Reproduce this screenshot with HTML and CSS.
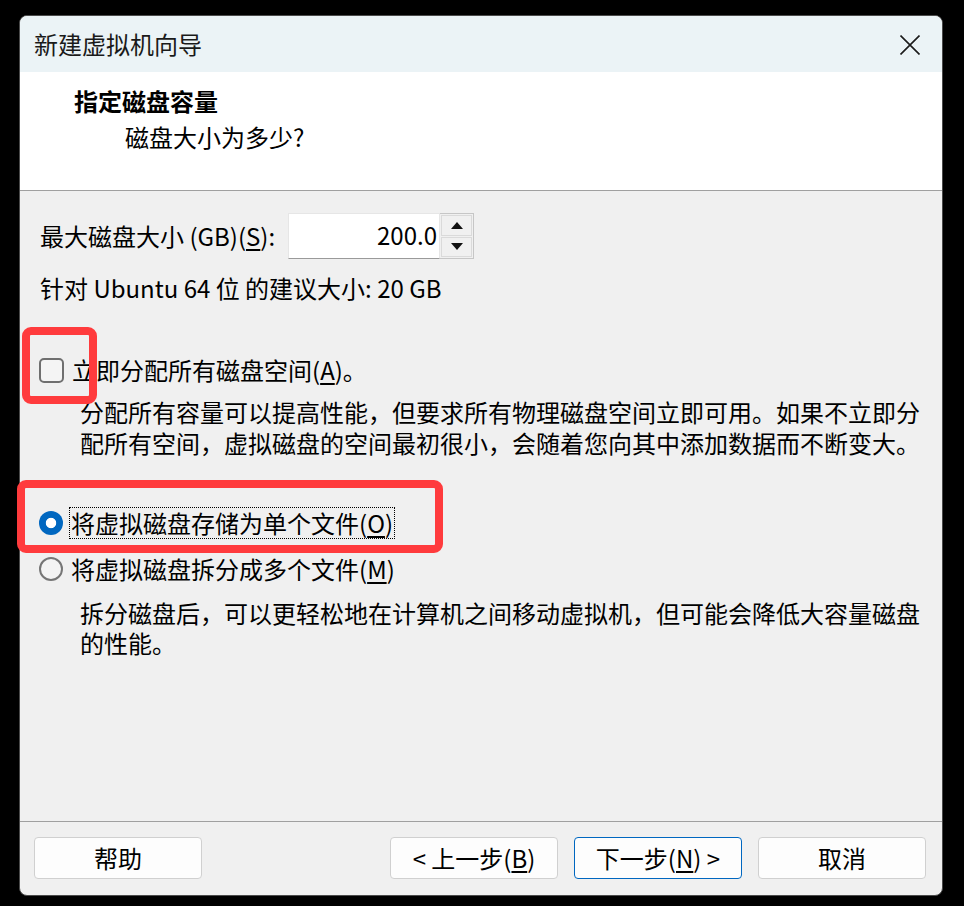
FILE: index.html
```html
<!DOCTYPE html>
<html lang="zh-CN">
<head>
<meta charset="utf-8">
<title>新建虚拟机向导</title>
<link rel="stylesheet" href="styles.css">
</head>
<body>
<div class="window">
  <div class="titlebar">
    <span class="title">新建虚拟机向导</span>
    <svg class="close" width="20" height="20" viewBox="0 0 20 20"><path d="M0.5 0.5 L19.5 19.5 M19.5 0.5 L0.5 19.5" stroke="#1b1b1b" stroke-width="1.6" fill="none"/></svg>
  </div>
  <div class="header">
    <div class="h-title">指定磁盘容量</div>
    <div class="h-sub">磁盘大小为多少?</div>
  </div>
  <div class="content">
    <div class="size-row">
      <span class="label">最大磁盘大小 (GB)(<u>S</u>):</span>
      <div class="spin">
        <div class="spin-input">200.0</div>
        <div class="spin-btns">
          <span class="spin-btn"><span class="arrow up"></span></span>
          <span class="spin-btn"><span class="arrow down"></span></span>
        </div>
      </div>
    </div>
    <div class="hint">针对 Ubuntu 64 位 的建议大小: 20 GB</div>
    <div class="option check-row">
      <span class="checkbox"></span>
      <span class="opt-label">立即分配所有磁盘空间(<u>A</u>)。</span>
    </div>
    <p class="desc desc-1">分配所有容量可以提高性能，但要求所有物理磁盘空间立即可用。如果不立即分配所有空间，虚拟磁盘的空间最初很小，会随着您向其中添加数据而不断变大。</p>
    <div class="option radio-row radio-first">
      <span class="radio checked"></span>
      <span class="opt-label focus">将虚拟磁盘存储为单个文件(<u>O</u>)</span>
    </div>
    <div class="option radio-row radio-second">
      <span class="radio"></span>
      <span class="opt-label">将虚拟磁盘拆分成多个文件(<u>M</u>)</span>
    </div>
    <p class="desc desc-2">拆分磁盘后，可以更轻松地在计算机之间移动虚拟机，但可能会降低大容量磁盘的性能。</p>
  </div>
  <div class="footer">
    <span class="btn">帮助</span>
    <span class="spacer"></span>
    <span class="btn">&lt; 上一步(<u>B</u>)</span>
    <span class="btn default">下一步(<u>N</u>) &gt;</span>
    <span class="btn">取消</span>
  </div>
</div>
<div class="mark mark-1"></div>
<div class="mark mark-2"></div>
</body>
</html>
```
FILE: styles.css
```css
* { box-sizing: border-box; }
html, body { margin: 0; padding: 0; }
body {
  background: #000;
  width: 964px;
  height: 906px;
  position: relative;
  overflow: hidden;
  font-family: "Noto Sans CJK SC", "Noto Sans", sans-serif;
  font-size: 24px;
  color: #000;
}
u { text-decoration: underline; text-underline-offset: 3px; text-decoration-thickness: 1.5px; }

.window {
  position: absolute;
  left: 19px;
  top: 15px;
  width: 924px;
  height: 881px;
  border: 1px solid #4a4a4a;
  border-radius: 8px;
  overflow: hidden;
  background: #f0f0f0;
  display: flex;
  flex-direction: column;
}

.titlebar {
  height: 56px;
  flex: none;
  background: #ebf3f6;
  display: flex;
  align-items: center;
  justify-content: space-between;
  padding: 0 22px 0 14px;
}
.title { font-size: 24px; line-height: 56px; color: #1a1a1a; }
.close { display: block; margin-top: 1px; }

.header {
  height: 119px;
  flex: none;
  background: #fff;
  border-bottom: 1px solid #a0a0a0;
  padding: 13px 0 0 54px;
}
.h-title { font-weight: 700; line-height: 32px; }
.h-sub { line-height: 32px; margin-top: 4px; padding-left: 51px; }

.content {
  height: 630px;
  flex: none;
  padding: 0 20px;
  display: flex;
  flex-direction: column;
}

.size-row {
  margin-top: 22px;
  display: flex;
  align-items: center;
  height: 46px;
}
.label { width: 248px; line-height: 32px; }
.spin { display: flex; height: 46px; }
.spin-input {
  width: 152px;
  height: 46px;
  background: #fff;
  border: 1px solid #e6e6e6;
  border-bottom-color: #9a9a9a;
  text-align: right;
  padding-right: 2px;
  line-height: 42px;
}
.spin-btns {
  width: 34px;
  height: 46px;
  border: 1px solid #c6c6c6;
  border-left: none;
  padding: 1px;
  display: flex;
  flex-direction: column;
  gap: 1px;
}
.spin-btn {
  flex: 1;
  background: #f0f0f0;
  border: 1px solid #dadada;
  display: flex;
  align-items: center;
  justify-content: center;
}
.arrow { width: 0; height: 0; border-left: 6px solid transparent; border-right: 6px solid transparent; }
.arrow.up { border-bottom: 7px solid #111; }
.arrow.down { border-top: 7px solid #111; }

.hint { margin-top: 13px; line-height: 32px; }

.option { display: flex; align-items: center; height: 32px; }
.check-row { margin-top: 50px; }
.radio-first { margin-top: 49px; }
.radio-second { margin-top: 14px; }

.checkbox {
  width: 25px;
  height: 25px;
  margin-left: -1px;
  border: 2px solid #6f6f6f;
  border-radius: 5px;
  background: #f4f4f4;
  flex: none;
}
.radio {
  width: 24px;
  height: 24px;
  margin-left: -1px;
  border-radius: 50%;
  border: 2px solid #767676;
  background: #f4f4f4;
  flex: none;
}
.radio.checked {
  border: none;
  background: radial-gradient(circle, #fff 0 4.8px, #0067c0 5.6px);
}
.opt-label { margin-left: 8px; line-height: 32px; }
.opt-label.focus {
  margin-left: 6px;
  padding: 0 1px;
  line-height: 30px;
  border: 1px dotted #000;
}

.desc {
  margin: 10px 0 0 40px;
  width: 850px;
  line-height: 31px;
}
.desc-2 { margin-top: 13px; line-height: 30px; }

.footer {
  flex: 1;
  border-top: 1px solid #a0a0a0;
  padding: 15px 16px 0 14px;
  display: flex;
  align-items: flex-start;
  gap: 16px;
}
.spacer { flex: 1; }
.btn {
  width: 168px;
  height: 42px;
  background: #fdfdfd;
  border: 1px solid #d0d0d0;
  border-radius: 4px;
  text-align: center;
  line-height: 40px;
  flex: none;
}
.btn.default { border-color: #0067c0; }

.mark {
  position: absolute;
  border: 8px solid #ff3b3d;
  border-radius: 9px;
}
.mark-1 { left: 22px; top: 327px; width: 75px; height: 77px; }
.mark-2 { left: 17px; top: 480px; width: 426px; height: 73px; }
```
